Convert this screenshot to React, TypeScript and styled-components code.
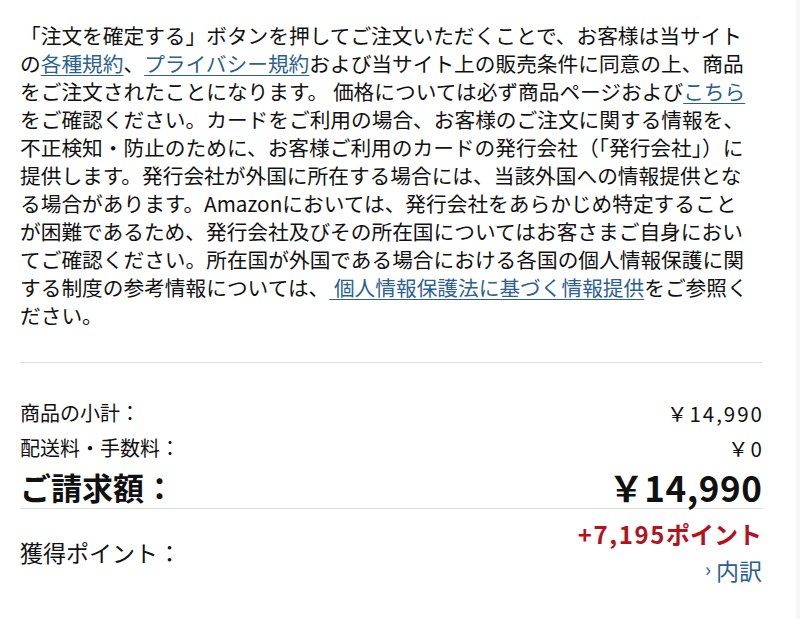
import React from "react";
import styled, { createGlobalStyle } from "styled-components";

const Global = createGlobalStyle`
  html, body { margin: 0; padding: 0; background: #f6f6f6; }
  body { font-family: "Noto Sans CJK JP", "Noto Sans", sans-serif; color: #111; }
`;

const Page = styled.div`
  width: 796px;
  min-height: 619px;
  background: #fff;
  box-sizing: border-box;
  padding: 21px 34px 0 20px;
`;

const Notice = styled.p`
  margin: 0;
  font-size: 20.7px;
  line-height: 28px;
  white-space: nowrap;
  color: #111;
`;

const Link = styled.a`
  color: #2c5f94;
  text-decoration: underline;
  text-decoration-thickness: 1px;
  text-underline-offset: 3px;
`;

const Divider = styled.hr<{ $top?: number }>`
  border: 0;
  border-top: 1px solid #dcdcdc;
  margin: ${(p) => p.$top ?? 0}px 0 0 0;
`;

const Summary = styled.div`
  padding-top: 32px;
`;

const Row = styled.div<{ $big?: boolean }>`
  display: flex;
  justify-content: space-between;
  align-items: center;
  height: ${(p) => (p.$big ? 43 : 35)}px;
  font-size: ${(p) => (p.$big ? 31 : 20)}px;
  font-weight: ${(p) => (p.$big ? 700 : 400)};
`;

const Amount = styled.span<{ $big?: boolean }>`
  font-size: ${(p) => (p.$big ? 35 : 20.5)}px;
  letter-spacing: ${(p) => (p.$big ? 0.6 : 2)}px;
  margin-right: ${(p) => (p.$big ? -0.6 : -2)}px;
`;

const PointsRow = styled.div`
  display: flex;
  justify-content: space-between;
  align-items: center;
  padding-top: 10px;
`;

const PointsLabel = styled.span`
  font-size: 23px;
`;

const PointsCol = styled.div`
  display: flex;
  flex-direction: column;
  align-items: flex-end;
  gap: 6px;
`;

const Points = styled.span`
  color: #b4121d;
  font-weight: 700;
  font-size: 24px;
  line-height: 30px;
`;

const Digits = styled.span`
  letter-spacing: 1.6px;
`;

const Breakdown = styled.a`
  color: #2c5f94;
  font-size: 23px;
  line-height: 30px;
  text-decoration: none;
  display: flex;
  align-items: center;
  gap: 5px;
`;

const Chevron = styled.span`
  font-size: 20px;
  line-height: 1;
  margin-top: -3px;
`;

export default function App() {
  return (
    <>
      <Global />
      <Page>
        <Notice>
          「注文を確定する」ボタンを押してご注文いただくことで、お客様は当サイト<br />
          の<Link>各種規約</Link>、<Link>プライバシー規約</Link>および当サイト上の販売条件に同意の上、商品<br />
          をご注文されたことになります。 価格については必ず商品ページおよび<Link>こちら</Link><br />
          をご確認ください。カードをご利用の場合、お客様のご注文に関する情報を、<br />
          不正検知・防止のために、お客様ご利用のカードの発行会社（「発行会社」）に<br />
          提供します。発行会社が外国に所在する場合には、当該外国への情報提供とな<br />
          る場合があります。Amazonにおいては、発行会社をあらかじめ特定すること<br />
          が困難であるため、発行会社及びその所在国についてはお客さまご自身におい<br />
          てご確認ください。所在国が外国である場合における各国の個人情報保護に関<br />
          する制度の参考情報については、<Link> 個人情報保護法に基づく情報提供</Link>をご参照く<br />
          ださい。
        </Notice>
        <Divider $top={33} />
        <Summary>
          <Row>
            <span>商品の小計：</span>
            <Amount>￥14,990</Amount>
          </Row>
          <Row>
            <span>配送料・手数料：</span>
            <Amount>￥0</Amount>
          </Row>
          <Row $big>
            <span>ご請求額：</span>
            <Amount $big>￥14,990</Amount>
          </Row>
        </Summary>
        <Divider />
        <PointsRow>
          <PointsLabel>獲得ポイント：</PointsLabel>
          <PointsCol>
            <Points>
              <Digits>+7,195</Digits>ポイント
            </Points>
            <Breakdown>
              <Chevron>›</Chevron>内訳
            </Breakdown>
          </PointsCol>
        </PointsRow>
      </Page>
    </>
  );
}
